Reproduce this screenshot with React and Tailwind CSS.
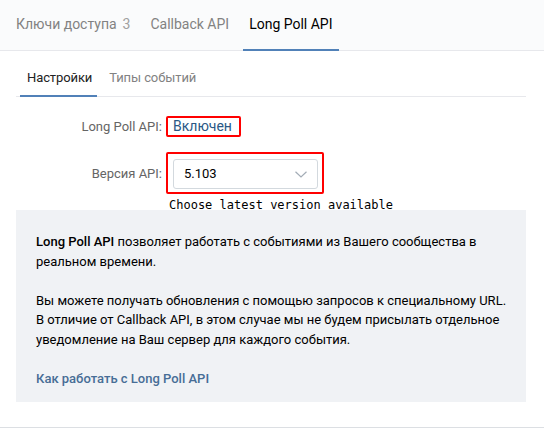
import { useState } from 'react'

const TOP_TABS = [
  { id: 'keys', label: 'Ключи доступа', count: 3 },
  { id: 'callback', label: 'Callback API' },
  { id: 'longpoll', label: 'Long Poll API' },
]

const SUB_TABS = [
  { id: 'settings', label: 'Настройки' },
  { id: 'events', label: 'Типы событий' },
]

export default function App() {
  const [tab, setTab] = useState('longpoll')
  const [subTab, setSubTab] = useState('settings')

  return (
    <div className="h-[428px] w-[544px] bg-white border-b border-[#dcdfe3] font-['Roboto',sans-serif] overflow-hidden">
      {/* Top tabs */}
      <div className="h-[51px] bg-[#fafbfc] border-b border-[#e7e8ec] pl-[10px] flex gap-2">
        {TOP_TABS.map(t => (
          <button
            key={t.id}
            onClick={() => setTab(t.id)}
            className={`h-[51px] -mb-px px-[6px] flex items-center text-[14px] border-b-2 ${
              tab === t.id ? 'border-[#5181b8] text-black' : 'border-transparent text-[#828282]'
            }`}
          >
            {t.label}
            {t.count && <span className="ml-[6px] text-[#a0a0a0]">{t.count}</span>}
          </button>
        ))}
      </div>

      <div className="pl-4 pr-[18px]">
        {/* Sub tabs */}
        <div className="mt-[9px] h-[37px] border-b border-[#e7e8ec] pl-1 flex gap-[5px]">
          {SUB_TABS.map(t => (
            <button
              key={t.id}
              onClick={() => setSubTab(t.id)}
              className={`h-[37px] -mb-px pl-[7px] pr-[5px] flex items-center text-[13px] tracking-[-0.1px] border-b-2 ${
                subTab === t.id ? 'border-[#5181b8] text-[#222]' : 'border-transparent text-[#828282]'
              }`}
            >
              {t.label}
            </button>
          ))}
        </div>

        {/* Form */}
        <div className="mt-[19px] flex items-center">
          <div className="w-[146px] text-right text-[13px] text-[#656565] pt-px">Long Poll API:</div>
          <div className="ml-1 h-[21px] border-2 border-[#ff0000] rounded-[2px] pl-[5px] pr-[7px] flex items-center text-[14px] leading-[17px] text-[#2a5885]">
            Включен
          </div>
        </div>

        <div className="mt-[15px] flex items-center">
          <div className="w-[146px] text-right text-[13px] text-[#656565] pt-[2px]">Версия API:</div>
          <div className="ml-1 h-[42px] border-2 border-[#ff0000] rounded-[2px] pl-[5px] pr-[4px] pt-[5px] pb-[3px]">
            <div className="w-[145px] h-[30px] border border-[#d3d9de] rounded-[3px] bg-white pl-[10px] pr-[10px] flex items-center justify-between text-[13px] text-black">
              <span>5.103</span>
              <svg width="12" height="7" viewBox="0 0 12 7" fill="none">
                <path d="M0.5 0.8 L6 6 L11.5 0.8" stroke="#a3acb6" strokeWidth="1.2" />
              </svg>
            </div>
          </div>
        </div>

        <div className="ml-[153px] mt-[5px] h-[12px] font-['DejaVu_Sans_Mono',monospace] text-[12px] leading-[12px] text-black">
          Choose latest version available
        </div>

        {/* Info box */}
        <div className="-mt-px h-[192px] bg-[#f0f2f5] pl-5 pr-4 pt-[22px] text-[13px] leading-[19.5px] text-black">
          <p>
            <span className="font-medium">Long Poll API</span> позволяет работать с событиями из Вашего сообщества в реальном времени.
          </p>
          <p className="mt-[19.5px]">
            Вы можете получать обновления с помощью запросов к специальному URL. В отличие от Callback API, в этом случае мы не будем присылать отдельное уведомление на Ваш сервер для каждого события.
          </p>
          <p className="mt-[19.5px]">
            <a href="#" className="font-medium text-[#476d96]">Как работать с Long Poll API</a>
          </p>
        </div>
      </div>
    </div>
  )
}
